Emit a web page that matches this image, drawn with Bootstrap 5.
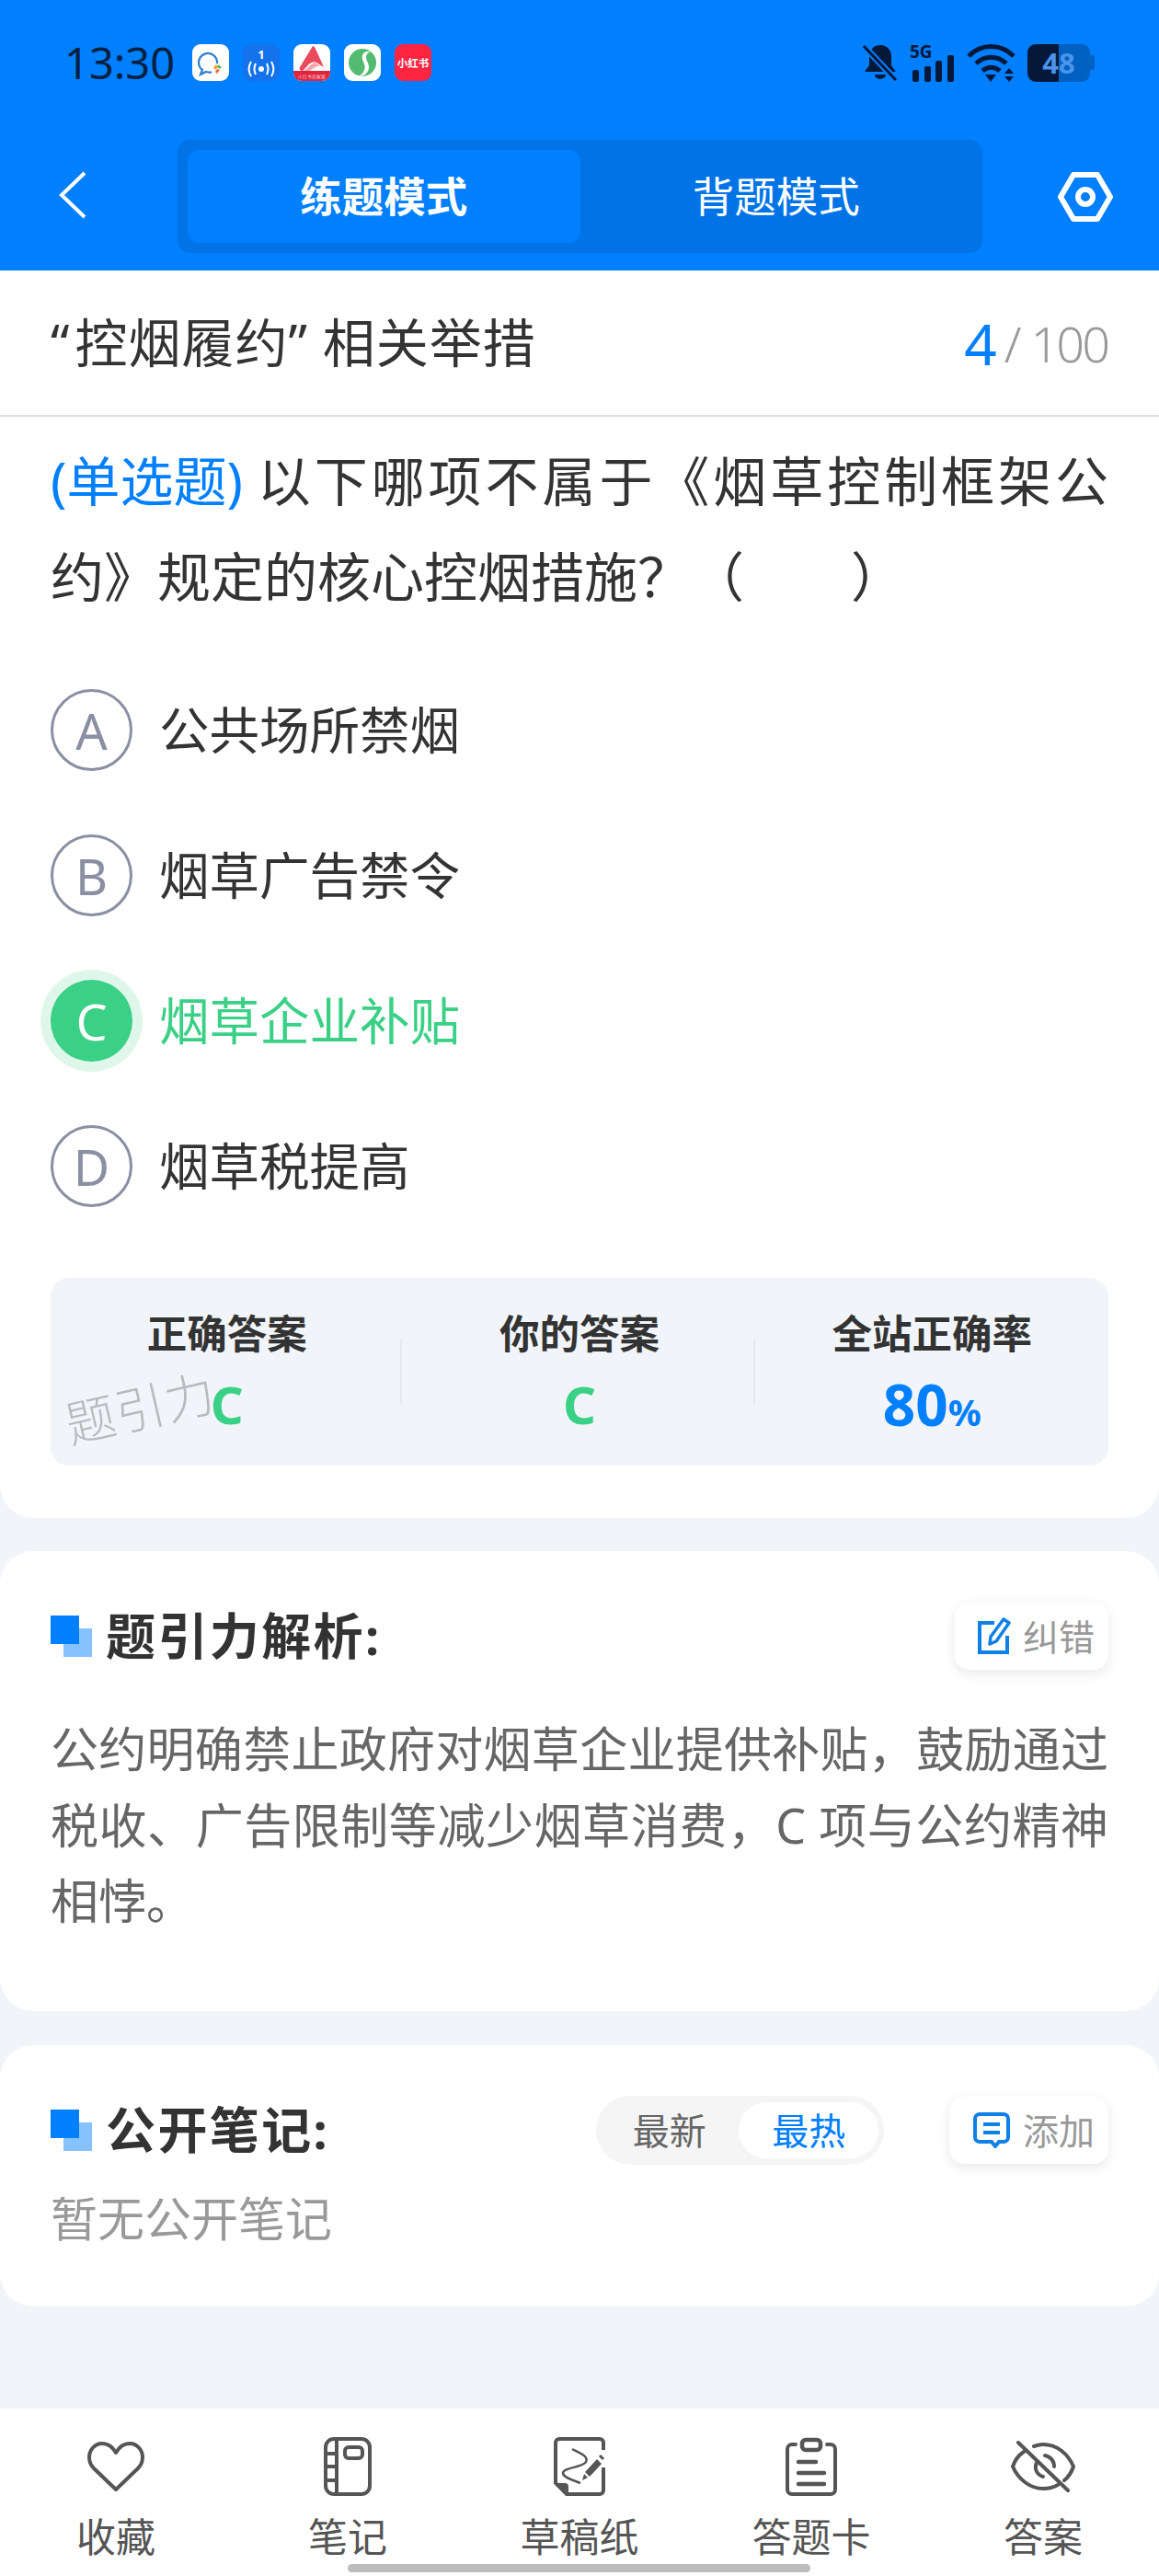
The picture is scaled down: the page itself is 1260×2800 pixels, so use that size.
<!DOCTYPE html>
<html lang="zh-CN">
<head>
    <meta charset="UTF-8">
    <meta name="viewport" content="width=device-width, initial-scale=1.0">
    <title>练题模式</title>
    <link href="https://cdn.jsdelivr.net/npm/bootstrap@5.3.0/dist/css/bootstrap.min.css" rel="stylesheet">
    <style>
        body {
            background: #f1f5f9;
            color: #333;
            font-family: "Noto Sans", "Noto Sans CJK SC", sans-serif;
        }

        svg { display: block; flex: none; }

        .page { width: 1260px; height: 2800px; overflow: hidden; }

        /* top blue header */
        .top-head { background: #007fff; height: 294px; }
        .status-row { height: 136px; padding: 0 70px; }
        .status-time { font-size: 47px; color: #06203f; line-height: 1; width: 117px; margin-right: 22px; white-space: nowrap; }
        .app-icons { gap: 15px; }
        .sys-icons { gap: 13px; }
        .battery { width: 68px; height: 41px; border-radius: 9px; background: linear-gradient(to right, #04193a 50%, #0061c2 50%); color: #4a94ea; font-size: 31px; font-weight: 700; line-height: 41px; text-align: center; }
        .battery-nub { width: 5px; height: 16px; background: #0061c2; border-radius: 0 3px 3px 0; }

        .tab-row { padding: 16px 0 0 64px; }
        .back-box { width: 129px; height: 120px; }
        .mode-tabs { width: 875px; height: 123px; background: #0073e6; border-radius: 14px; padding: 11px; }
        .mode-tab { color: #fff; font-size: 45.5px; line-height: 101px; text-align: center; width: 427px; border-radius: 12px; }
        .mode-tab.on { background: #007fff; font-weight: 700; }
        .gear-box { height: 123px; margin-left: 82px; }

        /* question card */
        .first-card { background: #fff; height: 1356px; border-radius: 0 0 36px 36px; }
        .title-row { height: 159px; padding: 0 55px; border-bottom: 2px solid #ddd; }
        .exam-title { font-size: 57px; line-height: 1; letter-spacing: 1px; }
        .quote-left { margin-right: 5px; }
        .count-now { font-size: 62px; color: #007fff; line-height: 1; margin-right: 8px; }
        .count-slash { font-size: 54px; color: #999; line-height: 1; font-weight: 300; margin-right: 10px; }
        .count-all { font-size: 54px; color: #999; line-height: 1; font-weight: 300; letter-spacing: -3px; margin-right: 1px; }
        .question { margin: 18px 55px 0; font-size: 58px; line-height: 104px; text-align: justify; }
        .question b { display: inline-block; font-weight: 400; color: #007fff; margin-right: 12px; }

        .option-list { margin: 70px 55px 0; gap: 69px; }
        .opt-dot { width: 89px; height: 89px; border: 3px solid #8a8fa3; border-radius: 50%; color: #8a8fa3; font-size: 54px; line-height: 1; }
        .opt-text { font-size: 54.5px; line-height: 1; margin-left: 29px; }
        .opt-right .opt-dot { background: #3ad086; border: 0; color: #fff; box-shadow: 0 0 0 11px #dff7ea; }
        .opt-right .opt-text { color: #3ad086; }

        .stat-box { margin: 77px 55px 0; height: 204px; background: #f1f5f9; border-radius: 20px; position: relative; }
        .stat-cell { text-align: center; position: relative; }
        .stat-cell + .stat-cell::before { content: ""; position: absolute; left: -3px; top: 66px; height: 72px; border-left: 2px solid #e6eaee; }
        .stat-label { font-size: 43.5px; font-weight: 700; line-height: 1; padding-top: 39px; }
        .stat-val { font-size: 56px; font-weight: 700; line-height: 1; margin-top: 26px; color: #3ad086; }
        .stat-val.rate { color: #007fff; font-size: 62px; margin-top: 23px; }
        .stat-val.rate small { font-size: 40px; font-weight: 700; }
        .stat-box .watermark { position: absolute; width: auto; left: 15px; top: 114px; font-size: 54px; font-weight: 300; color: #b8babd; line-height: 1; letter-spacing: 1px; transform: rotate(-13deg); }

        /* explanation and note cards */
        .info-card { background: #fff; border-radius: 36px; padding: 0 55px; }
        .card-explain { margin-top: 36px; height: 500px; padding-top: 55px; }
        .card-notes { margin-top: 37px; height: 284px; padding-top: 55px; }
        .head-row { height: 74px; }
        .square-mark { width: 45px; height: 45px; margin-right: 15px; position: relative; flex: none; }
        .square-mark::before { content: ""; position: absolute; right: 0; bottom: 0; width: 31px; height: 31px; background: #85c2ff; }
        .square-mark::after { content: ""; position: absolute; left: 0; top: 0; width: 31px; height: 31px; background: #007fff; }
        .head-title { font-size: 54px; font-weight: 700; line-height: 1; letter-spacing: 2.4px; }
        .side-btn { height: 73px; background: #fff; border-radius: 16px; box-shadow: 0 4px 14px rgba(0, 0, 0, .09); font-size: 39px; color: #999; line-height: 1; padding: 0 15px 0 25px; gap: 13px; }
        .sort-pill { width: 313px; height: 75px; background: #f5f5f5; border-radius: 38px; padding: 7px 6px 7px 4px; margin-right: 71px; font-size: 40px; color: #666; line-height: 61px; }
        .sort-pill span { flex: 1; text-align: center; border-radius: 31px; }
        .sort-pill .on { background: #fff; color: #007fff; }
        .explain-text { margin-top: 45px; font-size: 52px; line-height: 82.5px; color: #666; text-align: justify; }
        .empty-note { margin-top: 29px; font-size: 51px; line-height: 1.2; color: #999; }

        /* bottom tool bar */
        .tool-bar { margin-top: auto; height: 182px; background: #fff; position: relative; padding: 30px 0 0 0; }
        .tool-item { width: 252px; color: #555; font-size: 43px; line-height: 1; }
        .tool-icon { height: 66px; margin-bottom: 22px; }
        .home-line { position: absolute; left: 378px; bottom: 4px; width: 503px; height: 9px; border-radius: 5px; background: #bdbdbd; }
    </style>
</head>
<body>
<div class="page d-flex flex-column">

    <div class="top-head">
        <div class="status-row d-flex align-items-center">
            <span class="status-time">13:30</span>
            <div class="app-icons d-flex">
                <svg width="40" height="40" viewBox="0 0 40 40">
                    <rect width="40" height="40" rx="9" fill="#fff"/>
                    <path d="M27 21a10 10 0 1 0-16 7l-2 5 6-3c2 .6 4 .8 6 .4" fill="none" stroke="#2f7fd0" stroke-width="2.2"/>
                    <path d="M23 25l3-3 2 3-3 3z" fill="#f2a33a"/>
                    <path d="M28 22l4 3-2 2-3-2z" fill="#5bb85c"/>
                    <path d="M27 27l3 1-3 4-2-2z" fill="#e8663a"/>
                </svg>
                <svg width="40" height="40" viewBox="0 0 40 40">
                    <rect width="40" height="40" rx="9" fill="#1473ec"/>
                    <text x="20" y="16" font-size="13" font-weight="700" fill="#fff" text-anchor="middle">1</text>
                    <circle cx="20" cy="27" r="3" fill="#fff"/>
                    <path d="M14 21c-2 4-2 8 0 12M26 21c2 4 2 8 0 12M9 19c-3 5-3 11 0 16M31 19c3 5 3 11 0 16" fill="none" stroke="#fff" stroke-width="2"/>
                </svg>
                <svg width="40" height="40" viewBox="0 0 40 40">
                    <rect width="40" height="40" rx="9" fill="#fff"/>
                    <path d="M21 2c1 0 2 1 3 3l9 20-8-5c-4-2-8 1-11 5l-4 4c-3 0-4-2-3-4z" fill="#ea4a5c"/>
                    <path d="M11 29c4-1 7-8 12-9l7 4c-6-1-9 4-13 5z" fill="#f9a5ad"/>
                    <path d="M0 29h40v2a9 9 0 0 1-9 9H9a9 9 0 0 1-9-9z" fill="#e0243c"/>
                    <text x="20" y="37" font-size="5" fill="#fbc6cc" text-anchor="middle" font-family="Noto Sans CJK SC">小红书商家版</text>
                </svg>
                <svg width="40" height="40" viewBox="0 0 40 40">
                    <rect width="40" height="40" rx="9" fill="#fff"/>
                    <circle cx="20" cy="20" r="15" fill="#52bb6f"/>
                    <path d="M29 8c-7-1-10 3-9 8 1 5 4 7 2 12-1 3-3 5-6 7 7 0 11-5 11-10 0-5-3-7-3-11 0-3 2-5 5-6z" fill="#fff"/>
                </svg>
                <svg width="40" height="40" viewBox="0 0 40 40">
                    <rect width="40" height="40" rx="9" fill="#ff2442"/>
                    <text x="20" y="25" font-size="11.5" font-weight="700" fill="#fff" text-anchor="middle" font-family="Noto Sans CJK SC">小红书</text>
                </svg>
            </div>
            <div class="sys-icons d-flex align-items-center ms-auto">
                <svg width="38" height="42" viewBox="0 0 38 42">
                    <path d="M19 2c8 0 12 6 12 13v9l5 7H2l5-7v-9C7 8 11 2 19 2z" fill="#04193a"/>
                    <path d="M13 34h12a6 5 0 0 1-12 0z" fill="#04193a"/>
                    <path d="M1 3l35 37" stroke="#007fff" stroke-width="7"/>
                    <path d="M1 3l35 37" stroke="#04193a" stroke-width="3"/>
                </svg>
                <svg width="49" height="42" viewBox="0 0 49 42">
                    <text x="0" y="16" font-size="19" font-weight="700" fill="#04193a" font-family="Noto Sans">5G</text>
                    <rect x="3" y="29" width="7" height="13" rx="2" fill="#04193a"/>
                    <rect x="16" y="25" width="7" height="17" rx="2" fill="#04193a"/>
                    <rect x="28" y="19" width="7" height="23" rx="2" fill="#04193a"/>
                    <rect x="41" y="13" width="7" height="29" rx="2" fill="#04193a"/>
                </svg>
                <svg width="53" height="42" viewBox="0 0 53 42">
                    <path d="M2 14c14-14 35-14 49 0" fill="none" stroke="#04193a" stroke-width="5"/>
                    <path d="M10 22c10-9 23-9 33 0" fill="none" stroke="#04193a" stroke-width="5"/>
                    <path d="M17 30c6-5 13-5 19 0" fill="none" stroke="#04193a" stroke-width="5"/>
                    <path d="M20 34h12l-6 8z" fill="#04193a"/>
                    <path d="M46 27l5 6H41zM46 42l5-6H41z" fill="#04193a"/>
                </svg>
                <div class="d-flex align-items-center">
                    <div class="battery">48</div>
                    <div class="battery-nub"></div>
                </div>
            </div>
        </div>
        <div class="tab-row d-flex">
            <div class="back-box d-flex align-items-center">
                <svg width="30" height="52" viewBox="0 0 30 52"><path d="M28 2L3 26l25 24" fill="none" stroke="#fff" stroke-width="4"/></svg>
            </div>
            <div class="mode-tabs d-flex">
                <div class="mode-tab on">练题模式</div>
                <div class="mode-tab">背题模式</div>
            </div>
            <div class="gear-box d-flex align-items-center">
                <svg width="60" height="54" viewBox="0 0 60 54">
                    <path d="M17 3h26l14 24-14 24H17L3 27z" fill="none" stroke="#fff" stroke-width="6" stroke-linejoin="round"/>
                    <circle cx="30" cy="27" r="8" fill="none" stroke="#fff" stroke-width="6"/>
                </svg>
            </div>
        </div>
    </div>

    <div class="first-card">
        <div class="title-row d-flex align-items-center justify-content-between">
            <div class="exam-title"><span class="quote-left">“</span>控烟履约” 相关举措</div>
            <div class="d-flex align-items-center">
                <span class="count-now">4</span>
                <span class="count-slash">/</span>
                <span class="count-all">100</span>
            </div>
        </div>
        <div class="question"><b>(单选题)</b>以下哪项不属于《烟草控制框架公约》规定的核心控烟措施？（　　）</div>

        <div class="option-list d-flex flex-column">
            <div class="d-flex align-items-center">
                <div class="opt-dot d-flex align-items-center justify-content-center">A</div>
                <div class="opt-text">公共场所禁烟</div>
            </div>
            <div class="d-flex align-items-center">
                <div class="opt-dot d-flex align-items-center justify-content-center">B</div>
                <div class="opt-text">烟草广告禁令</div>
            </div>
            <div class="opt-right d-flex align-items-center">
                <div class="opt-dot d-flex align-items-center justify-content-center">C</div>
                <div class="opt-text">烟草企业补贴</div>
            </div>
            <div class="d-flex align-items-center">
                <div class="opt-dot d-flex align-items-center justify-content-center">D</div>
                <div class="opt-text">烟草税提高</div>
            </div>
        </div>

        <div class="stat-box row g-0">
            <div class="stat-cell col-4">
                <div class="stat-label">正确答案</div>
                <div class="stat-val">C</div>
            </div>
            <div class="stat-cell col-4">
                <div class="stat-label">你的答案</div>
                <div class="stat-val">C</div>
            </div>
            <div class="stat-cell col-4">
                <div class="stat-label">全站正确率</div>
                <div class="stat-val rate">80<small>%</small></div>
            </div>
            <div class="watermark">题引力</div>
        </div>
    </div>

    <div class="info-card card-explain">
        <div class="head-row d-flex align-items-center">
            <div class="square-mark"></div>
            <div class="head-title">题引力解析:</div>
            <div class="side-btn d-flex align-items-center ms-auto">
                <svg width="36" height="40" viewBox="0 0 36 40">
                    <path d="M18 6H2v32h30V20" fill="none" stroke="#0f80e6" stroke-width="4"/>
                    <path d="M28 2l6 4-14 20-7 3 1-8z" fill="none" stroke="#0f80e6" stroke-width="3.5" stroke-linejoin="round"/>
                </svg>
                <span>纠错</span>
            </div>
        </div>
        <div class="explain-text">公约明确禁止政府对烟草企业提供补贴，鼓励通过税收、广告限制等减少烟草消费，C 项与公约精神相悖。</div>
    </div>

    <div class="info-card card-notes">
        <div class="head-row d-flex align-items-center">
            <div class="square-mark"></div>
            <div class="head-title">公开笔记:</div>
            <div class="sort-pill d-flex ms-auto">
                <span>最新</span>
                <span class="on">最热</span>
            </div>
            <div class="side-btn d-flex align-items-center">
                <svg width="42" height="40" viewBox="0 0 42 40">
                    <path d="M8 3h26a5 5 0 0 1 5 5v20a5 5 0 0 1-5 5h-5l-4 5-4-5H8a5 5 0 0 1-5-5V8a5 5 0 0 1 5-5z" fill="none" stroke="#0f80e6" stroke-width="4"/>
                    <path d="M12 14h18M12 23h18" stroke="#0f80e6" stroke-width="4"/>
                </svg>
                <span>添加</span>
            </div>
        </div>
        <div class="empty-note">暂无公开笔记</div>
    </div>

    <div class="tool-bar d-flex">
        <div class="tool-item text-center">
            <div class="tool-icon d-flex justify-content-center align-items-center">
                <svg width="64" height="56" viewBox="0 0 64 56"><path d="M32 13C28 6 23 3 17 3 9 3 3 10 3 18c0 5 2 9 5 12l24 23 24-23c3-3 5-7 5-12 0-8-6-15-14-15-6 0-11 3-15 10z" fill="none" stroke="#555" stroke-width="4" stroke-linejoin="round"/></svg>
            </div>
            收藏
        </div>
        <div class="tool-item text-center">
            <div class="tool-icon d-flex justify-content-center align-items-center">
                <svg width="52" height="64" viewBox="0 0 52 64" fill="none" stroke="#555" stroke-width="4">
                    <rect x="2" y="2" width="48" height="60" rx="9"/>
                    <path d="M14 2v60M2 18h12M2 32h12M2 47h12"/>
                    <rect x="23" y="11" width="19" height="12" rx="4"/>
                </svg>
            </div>
            笔记
        </div>
        <div class="tool-item text-center">
            <div class="tool-icon d-flex justify-content-center align-items-center">
                <svg width="56" height="64" viewBox="0 0 56 64" fill="none" stroke="#555" stroke-width="4">
                    <path d="M54 14V6a4 4 0 0 0-4-4H6a4 4 0 0 0-4 4v44l12 12h36a4 4 0 0 0 4-4V33"/>
                    <path d="M3 50h9a4 4 0 0 1 4 4v7z" fill="#555" stroke="none"/>
                    <path d="M20 13c10 5 18 8 15 14-3 6-25 6-25 12 0 5 12 8 19 11" stroke-width="2.5"/>
                    <path d="M47 24l5 5-13 14-5-5zM33 40l4 4-6 3z" fill="#555" stroke="none"/>
                    <path d="M50 20l4 4" stroke-width="3"/>
                </svg>
            </div>
            草稿纸
        </div>
        <div class="tool-item text-center">
            <div class="tool-icon d-flex justify-content-center align-items-center">
                <svg width="56" height="64" viewBox="0 0 56 64" fill="none" stroke="#555">
                    <path d="M11 8H7a5 5 0 0 0-5 5v44a5 5 0 0 0 5 5h42a5 5 0 0 0 5-5V13a5 5 0 0 0-5-5h-4" stroke-width="4" stroke-linecap="round"/>
                    <rect x="18" y="3" width="20" height="11" rx="4" stroke-width="4.5"/>
                    <path d="M14 27h19M14 39h28M14 51h28" stroke-width="4.5" stroke-linecap="round"/>
                </svg>
            </div>
            答题卡
        </div>
        <div class="tool-item text-center">
            <div class="tool-icon d-flex justify-content-center align-items-center">
                <svg width="70" height="56" viewBox="0 0 70 56" fill="none" stroke="#555" stroke-width="4" stroke-linecap="round">
                    <path d="M14 12C8 16 4 22 2 28c6 14 19 24 33 24 6 0 11-1 16-4M25 6c3-1 6-2 10-2 15 0 27 10 33 24-2 6-5 11-10 15"/>
                    <path d="M28 24c-3 6 0 13 7 15M37 16c6 1 10 6 10 12"/>
                    <path d="M8 2l54 52"/>
                </svg>
            </div>
            答案
        </div>
        <div class="home-line"></div>
    </div>
</div>
<script src="https://cdn.jsdelivr.net/npm/bootstrap@5.3.0/dist/js/bootstrap.bundle.min.js"></script>
</body>
</html>
